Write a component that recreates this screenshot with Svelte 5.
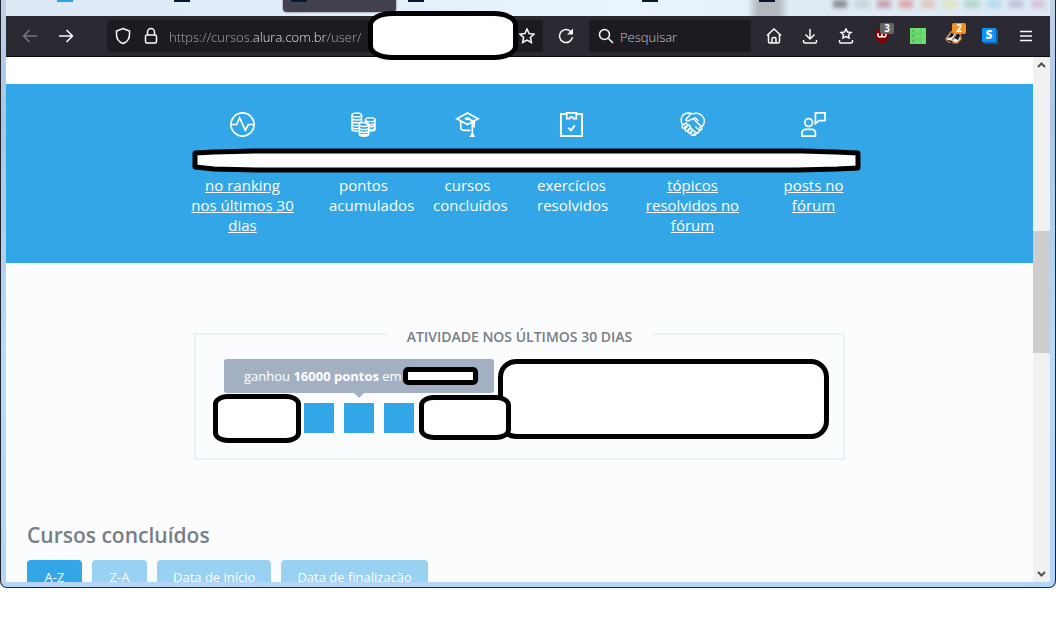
<script lang="ts">
    interface Stat {
        icon: string;
        label: string;
        link: boolean;
    }

    const stats: Stat[] = [
        { icon: 'pulse', label: 'no ranking nos últimos 30 dias', link: true },
        { icon: 'coins', label: 'pontos acumulados', link: false },
        { icon: 'cap', label: 'cursos concluídos', link: false },
        { icon: 'board', label: 'exercícios resolvidos', link: false },
        { icon: 'hands', label: 'tópicos resolvidos no fórum', link: true },
        { icon: 'post', label: 'posts no fórum', link: true },
    ];
    const orders = ['A-Z', 'Z-A', 'Data de início', 'Data de finalização'];
    const tabs = ['blue', 'navy', 'navy active', 'navy', 'plain', 'navy', 'navy'];
    const swatches = ['#8d9092', '#c9d3da', '#c9a3ad', '#dfa6ab', '#dfc8bb', '#dfe6bd', '#b4d6c6', '#b8dbee', '#c3c3df', '#d8c4d8'];
    const days = Array.from({ length: 15 }, (_, i) => i);
    let selected = $state('A-Z');
    let address = $state('https://cursos.alura.com.br/user/');
</script>

<div class="window">
    <div class="tabs">
        {#each tabs as tab}
        <div class="tab {tab}"><i></i></div>
        {/each}
        <div class="swatches">
            {#each swatches as color}
            <i style="background: {color}"></i>
            {/each}
        </div>
    </div>

    <div class="toolbar">
        <button class="tool dim" aria-label="Voltar">
            <svg width="16" height="16" viewBox="0 0 16 16"><path d="M15 8H1.5M7.5 2 1.5 8l6 6" /></svg>
        </button>
        <button class="tool" aria-label="Avançar">
            <svg width="16" height="16" viewBox="0 0 16 16"><path d="M1 8h13.500M8.500 2l6 6-6 6" /></svg>
        </button>
        <div class="address">
            <svg width="16" height="18" viewBox="0 0 16 18"><path d="M8 1.500 14.500 4v3.500c0 4-2.500 7.500-6.500 9-4-1.500-6.500-5-6.500-9V4z" /></svg>
            <svg width="16" height="18" viewBox="0 0 16 18"><rect x="2.500" y="8" width="11" height="8" rx="1.500" /><path d="M4.500 8V5a3.500 3.500 0 0 1 7 0v3" /></svg>
            <input type="text" aria-label="Endereço" bind:value={address} />
            <button class="star" aria-label="Favoritar">
                <svg width="16" height="16" viewBox="0 0 16 16"><path d="m8 1 2.100 4.500 4.900.6-3.600 3.400 1 5L8 12l-4.400 2.500 1-5L1 6.100l4.900-.6z" /></svg>
            </button>
            <div class="cover cover-url"></div>
        </div>
        <button class="tool" aria-label="Recarregar">
            <svg width="16" height="16" viewBox="0 0 16 16"><path d="M13.500 4.500A6.500 6.500 0 1 0 14.500 9" /><path class="solid" d="M15 .5v6H9z" /></svg>
        </button>
        <label class="search">
            <svg width="16" height="16" viewBox="0 0 16 16"><circle cx="6.500" cy="6.500" r="5" /><path d="m10.500 10.500 4.500 4.500" /></svg>
            <input type="search" aria-label="Pesquisar" placeholder="Pesquisar" />
        </label>
        <div class="extras">
            <button class="tool" aria-label="Início">
                <svg width="16" height="16" viewBox="0 0 16 16"><path d="M1 7.500 8 1l7 6.500M2.500 6.500v7q0 1.500 1.500 1.500h8q1.500 0 1.500-1.500v-7M6 15v-4q0-1.500 1.500-1.500h1Q10 9.500 10 11v4" /></svg>
            </button>
            <button class="tool" aria-label="Downloads">
                <svg width="16" height="16" viewBox="0 0 16 16"><path d="M8 1v10M3.500 6.500 8 11l4.500-4.500M1.500 12v1.500q0 1.500 1.500 1.500h10q1.500 0 1.500-1.500V12" /></svg>
            </button>
            <button class="tool" aria-label="Favoritos">
                <svg width="16" height="16" viewBox="0 0 16 16"><path d="m8 1 1.500 3 3.500.5-2.500 2.300.6 3.200L8 8.500 4.900 10l.6-3.200L3 4.500 6.500 4zM1.500 12v1.500q0 1.500 1.500 1.500h10q1.500 0 1.500-1.500V12" /></svg>
            </button>
            <button class="tool" aria-label="Bloqueador de anúncios">
                <svg class="flat" width="16" height="16" viewBox="0 0 16 16"><path fill="#800000" d="M8 0c2 1.500 4 2 6.500 2.200V8c0 4-3 6.200-6.500 8-3.500-1.800-6.500-4-6.500-8V2.200C4 2 6 1.500 8 0z" /><path fill="none" stroke="#fff" stroke-width="1.400" d="M4 5v2q0 2 2 2t2-2V5M8 7q0 2 2 2t2-2-2-2" /></svg>
                <b class="badge gray">3</b>
            </button>
            <button class="tool" aria-label="Planilha">
                <svg class="flat" width="16" height="16" viewBox="0 0 16 16"><path fill="#6fdc6f" d="M0 0h16v16H0z" /><path stroke="#62d068" d="M4.500 0v16M10.500 0v16M0 5.500h16M0 11.500h16" /><path stroke="#45ad4e" d="M2 3h2M2 8h2M2 13h2" /></svg>
            </button>
            <button class="tool" aria-label="Privacidade">
                <svg class="flat" width="18" height="16" viewBox="0 0 18 16"><path fill="#f4efe7" stroke="#c9875a" d="M1 11 6 4l6-3 3 4 1 6-4 4-8-1z" /><path fill="#171717" d="m3 10 4-6 5-2-5 7zM9 10l4-7 2 5-2 4zM3 12l5 1-1 2-4-2z" /><path fill="#8b8b8b" d="m7 11 4-6 1 1-4 7z" /></svg>
                <b class="badge orange">2</b>
            </button>
            <button class="tool" aria-label="Extensão S">
                <span class="letter">S</span>
            </button>
            <button class="tool" aria-label="Menu">
                <svg width="16" height="16" viewBox="0 0 16 16"><path d="M2 3.500h12M2 8h12M2 12.500h12" /></svg>
            </button>
        </div>
    </div>

    <div class="viewport">
        <main>
            <section class="stats">
                <ul>
                    {#each stats as stat}
                    <li>
                        <svg width="25" height="25" viewBox="0 0 26 26">
                            {#if stat.icon === 'pulse'}
                            <circle cx="13" cy="13" r="12" />
                            <path d="M1 13h6l3-7 6 13 3-6h6" />
                            {:else if stat.icon === 'coins'}
                            <g stroke-width="1.500">
                                <ellipse cx="6" cy="3" rx="5" ry="2" />
                                <path d="M1 3v15c0 1 2 2 5 2h2M11 3v7M1 6c0 3 10 3 10 0M1 9c0 3 10 3 10 0M1 12c0 2 3 3 7 2M1 15c0 2 3 3 7 2" />
                                <ellipse cx="20" cy="8" rx="5" ry="2" />
                                <path d="M15 8v3M25 8v10c0 1-2 2-5 2h-1M15 11c1 3 10 3 10 0M18 15c4 1 7 0 7-2M18 18c4 1 7 0 7-2" />
                                <ellipse cx="13.500" cy="13" rx="5" ry="2" />
                                <path d="M8.500 13v10c0 3 10 3 10 0V13M8.500 16c0 3 10 3 10 0M8.500 19c0 3 10 3 10 0M8.500 21.500c0 3 10 3 10 0" />
                            </g>
                            {:else if stat.icon === 'cap'}
                            <path d="M13 1 24 7l-11 6L2 7zM6 10v7q0 2 3 2h7M20 10v6M13 7l5 2v12" />
                            <ellipse class="solid" cx="13" cy="7" rx="3" ry="1.500" />
                            <path class="solid" d="m18 20 3 6h-6z" />
                            {:else if stat.icon === 'board'}
                            <path stroke-width="2" d="M8 2H2v23h22V2h-6" />
                            <path d="M8 1v6h3q0-2 2-2t2 2h3V1z" />
                            <path stroke-width="2" d="m9.500 16.500 3 2.500 4-5" />
                            {:else if stat.icon === 'hands'}
                            <path stroke-width="1.500" d="M3 14C-1 8 2 2 8 1c2 0 4 0 5 1 5-2 10 0 12 5 1 4-1 8-5 10M11 2 6 8q1 3 5 0l3-1 9 9M14 7l2-1 3 3" />
                            <path stroke-width="1.500" d="m5 12-3 3q0 3 3 1l3-3q-1-2-3-1zM8 14l-3 4q1 3 3 1l3-3q-1-3-3-2zM11 17l-3 3q1 3 3 1l2-2q0-2-2-2zM13 20l-2 2q1 3 3 2l1-2M14 24q2 1 3-2l-3-3M17 22q3 0 3-3l-4-4M20 19q3 0 3-3" />
                            {:else}
                            <circle cx="8" cy="11" r="4" />
                            <path d="M1 25v-3q0-4 4-4h6q4 0 4 4v3zM15 1h10v8h-6l-4 3z" />
                            {/if}
                        </svg>
                        {#if stat.link}
                        <a href="#ranking">{stat.label}</a>
                        {:else}
                        <span>{stat.label}</span>
                        {/if}
                    </li>
                    {/each}
                </ul>
                <svg class="cover-line" viewBox="0 0 670 26" preserveAspectRatio="none">
                    <path d="M3 5 22 4l40-1h548l34 1 22 1v15l-21 1-40 1H65l-43-1-19-2z" />
                </svg>
            </section>

            <section class="activity">
                <h2>ATIVIDADE NOS ÚLTIMOS 30 DIAS</h2>
                <div class="tip">ganhou <b>16000 pontos</b> em<div class="cover cover-date"></div></div>
                <div class="days">
                    {#each days as day (day)}
                    <i></i>
                    {/each}
                </div>
                <div class="cover cover-right"></div>
                <div class="cover cover-left"></div>
                <div class="cover cover-middle"></div>
            </section>

            <section class="courses">
                <h2>Cursos concluídos</h2>
                <div class="orders">
                    {#each orders as order}
                    <button class:selected={selected === order} onclick={() => selected = order}>{order}</button>
                    {/each}
                </div>
            </section>
        </main>
        <div class="scrollbar">
            <svg width="9" height="6" viewBox="0 0 9 6"><path d="m1 5 3.500-3.500L8 5" /></svg>
            <div class="track"><div class="thumb"></div></div>
            <svg width="9" height="6" viewBox="0 0 9 6"><path d="m1 1 3.500 3.500L8 1" /></svg>
        </div>
    </div>
</div>

<style>
    :global(body){
        background: #fff;
    }
    .window, .window *{
        box-sizing: border-box;
    }
    .window{
        display: flex;
        flex-direction: column;
        height: calc(100vh - 33px);
        padding: 0 5px 5px;
        border: 1px solid #20242c;
        border-top: 0;
        border-radius: 0 0 7px 7px;
        background: linear-gradient(#c3d3e6, #a9c6e6 20%, #b9d8fa 60%, #b5d5f8);
        font-family: "Open Sans", "Noto Sans", sans-serif;
        overflow: hidden;
    }
    button{
        padding: 0;
        border: 0;
        background: none;
        font: inherit;
        color: inherit;
    }
    svg{
        flex: none;
        fill: none;
        stroke: currentColor;
        stroke-width: 1.5;
    }
    .solid{
        fill: currentColor;
        stroke: none;
    }
    .flat{
        stroke: none;
    }
    .cover{
        position: absolute;
        border: 5px solid #000;
        background: #fff;
    }

    .tabs{
        display: flex;
        flex: none;
        height: 16px;
        padding-left: 43px;
        background: linear-gradient(90deg, #dce9f5, #e2eefa 30%, #eaf4fd 60%, #e6f0f9 71%, #b4babf 72%, #b4babf 74%, #dfeaf4 75%, #dce9f5);
        overflow: hidden;
    }
    .tab{
        width: 117px;
        height: 12px;
        padding-left: 8px;
        flex: none;
    }
    .tab i{
        display: block;
        width: 16px;
        height: 2px;
    }
    .tab.blue i{
        background: #2ba5e6;
    }
    .tab.navy i{
        background: #051933;
    }
    .tab.active{
        width: 113px;
        margin-right: 4px;
        border-radius: 0 0 4px 4px;
        background: #42414d;
        box-shadow: 0 0 2px #42414d;
    }
    .swatches{
        display: flex;
        flex: none;
        gap: 8px;
        margin-left: -35px;
        filter: blur(2px);
    }
    .swatches i{
        width: 14px;
        height: 8px;
    }

    .toolbar{
        display: flex;
        flex: none;
        align-items: center;
        height: 41px;
        padding: 0 6px;
        border-bottom: 1px solid #0c0c0d;
        background: #2b2a33;
        color: #fbfbfe;
    }
    .tool{
        position: relative;
        display: flex;
        flex: none;
        align-items: center;
        justify-content: center;
        width: 36px;
        height: 32px;
    }
    .dim{
        color: #77767e;
    }
    .address{
        position: relative;
        display: flex;
        flex: 1;
        align-items: center;
        gap: 12px;
        height: 32px;
        margin: 0 5px 0 23px;
        padding: 0 8px;
        border-radius: 4px;
        background: #1c1b22;
    }
    .toolbar input{
        flex: 1;
        min-width: 0;
        padding: 2px 0 0;
        border: 0;
        outline: 0;
        background: none;
        font: 300 13px "Open Sans", "Noto Sans", sans-serif;
        color: #fbfbfe;
    }
    .address input{
        margin-left: -2px;
        background: linear-gradient(90deg, #b4b4ba 83px, #fff 83px 158px, #b4b4ba 158px);
        background-clip: text;
        color: transparent;
    }
    .star{
        display: flex;
    }
    .cover-url{
        left: 261px;
        top: -9px;
        width: 150px;
        height: 49px;
        border-radius: 24px / 14px;
        z-index: 1;
    }
    .search{
        display: flex;
        align-items: center;
        gap: 6px;
        width: 162px;
        height: 32px;
        margin: 0 5px;
        padding: 0 9px;
        border-radius: 4px;
        background: #1c1b22;
    }
    .search input::placeholder{
        color: #c9c8ce;
        opacity: 1;
    }
    .extras{
        display: flex;
    }
    .badge{
        position: absolute;
        left: 16px;
        top: 3px;
        width: 14px;
        height: 11px;
        border-radius: 2px;
        font-size: 10px;
        line-height: 11px;
        text-align: center;
        color: #fff;
    }
    .gray{
        background: #666;
    }
    .orange{
        background: #f09020;
    }
    .letter{
        width: 14px;
        height: 14px;
        margin: 0 2px 2px 0;
        background: #0a93f8;
        box-shadow: 1px 1px #075fa8, 2px 2px #075fa8;
        font-size: 12px;
        font-weight: 800;
        line-height: 14px;
    }

    .viewport{
        display: flex;
        flex: 1;
        min-height: 0;
    }
    main{
        flex: 1;
        min-width: 0;
        padding-top: 27px;
        background: linear-gradient(#fff 27px, #fafcfe 27px);
        overflow: hidden;
    }
    .stats{
        position: relative;
        height: 179px;
        padding-top: 28px;
        background: #32a6e6;
        color: #fff;
    }
    .stats ul{
        display: grid;
        grid-template-columns: 103px 69px 69px 69px 103px 69px;
        gap: 35px;
        justify-content: center;
        margin: 0;
        padding: 0;
        list-style: none;
    }
    .stats li{
        display: flex;
        flex-direction: column;
        align-items: center;
        gap: 38px;
        font-size: 15px;
        line-height: 20px;
        text-align: center;
    }
    .stats li svg{
        stroke-width: 1.8;
    }
    .stats a, .stats span{
        width: 100%;
        color: #fff;
    }
    .cover-line{
        position: absolute;
        left: calc(50% - 328px);
        top: 64px;
        width: 670px;
        height: 26px;
        fill: #fff;
        stroke: #000;
        stroke-width: 5;
        stroke-linejoin: round;
    }

    .activity{
        position: relative;
        width: 651px;
        margin: 70px auto 0;
        padding: 0 28px 25px;
        border: 2px solid #e8f1f6;
    }
    .activity h2{
        width: 266px;
        margin: -8px auto 12px;
        background: #fafcfe;
        font-size: 14px;
        font-weight: 600;
        line-height: 20px;
        text-align: center;
        color: #777e84;
    }
    .tip{
        position: relative;
        width: 270px;
        height: 34px;
        margin-bottom: 10px;
        padding-left: 20px;
        border-radius: 3px;
        background: #a2b0c2;
        font-size: 13px;
        line-height: 34px;
        color: #fff;
    }
    .tip::after{
        content: "";
        position: absolute;
        left: 50%;
        top: 100%;
        margin-left: -5px;
        border: 5px solid transparent;
        border-top-color: #a2b0c2;
        border-bottom: 0;
    }
    .days{
        display: flex;
        gap: 10px;
    }
    .days i{
        width: 30px;
        height: 30px;
        background: #32a6e6;
    }
    .cover-date{
        left: 179px;
        top: 8px;
        width: 75px;
        height: 18px;
        border-radius: 5px;
    }
    .cover-left{
        left: 17px;
        top: 59px;
        width: 88px;
        height: 49px;
        border-radius: 15px / 10px;
    }
    .cover-middle{
        left: 223px;
        top: 60px;
        width: 92px;
        height: 45px;
        border-radius: 15px / 10px;
    }
    .cover-right{
        left: 302px;
        top: 24px;
        width: 331px;
        height: 80px;
        border-radius: 18px;
    }

    .courses{
        padding: 0 21px;
        margin-top: 60px;
    }
    .courses h2{
        margin: 0 0 10px;
        font-size: 21px;
        font-weight: 600;
        line-height: 30px;
        color: #777e84;
    }
    .orders{
        display: flex;
        gap: 10px;
    }
    .orders button{
        min-width: 55px;
        height: 34px;
        padding: 0 16px;
        border-radius: 4px;
        background: #98d1f2;
        font-size: 13px;
        color: #fff;
    }
    .orders .selected{
        background: #32a6e6;
    }

    .scrollbar{
        display: flex;
        flex-direction: column;
        flex: none;
        align-items: center;
        width: 17px;
        padding: 5px 0;
        background: #f0f0f0;
        color: #505050;
    }
    .scrollbar svg{
        stroke-width: 2;
    }
    .track{
        flex: 1;
        width: 100%;
        padding-top: 163px;
    }
    .thumb{
        height: 122px;
        background: #cdcdcd;
    }
</style>
